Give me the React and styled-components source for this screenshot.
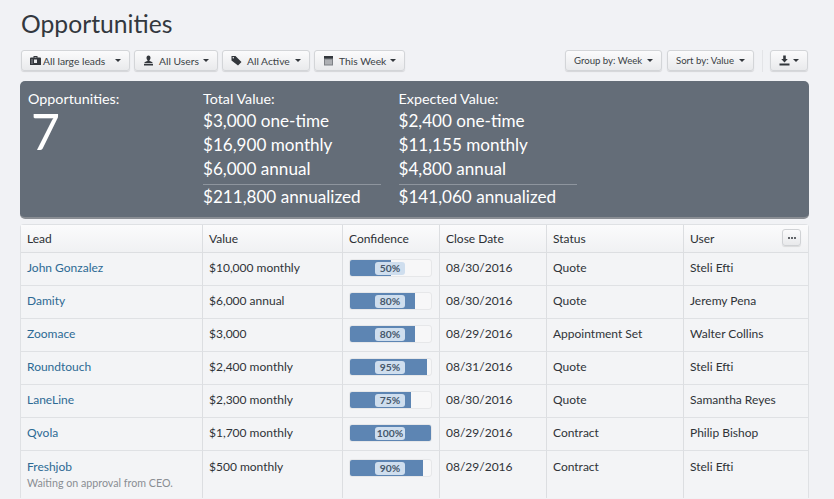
import React from 'react';
import styled, { createGlobalStyle } from 'styled-components';

const GlobalStyle = createGlobalStyle`
  html, body {
    margin: 0;
    height: 100%;
    overflow: hidden;
    background: #f1f2f5;
    font-family: Lato, "Open Sans", sans-serif;
    color: #2e3338;
  }
`;

const Page = styled.div`
  width: 834px;
  height: 499px;
  overflow: hidden;
  padding: 0 25px 0 20px;
  box-sizing: border-box;
`;

const Title = styled.h1`
  margin: 0;
  padding: 9px 0 0 1px;
  height: 50px;
  box-sizing: border-box;
  font-size: 24.7px;
  line-height: 30px;
  font-weight: 400;
  color: #33383e;
`;

const Toolbar = styled.div`
  display: flex;
  align-items: center;
  height: 21px;
  padding: 0 1px;
  gap: 4px;
`;

const Spacer = styled.div`
  flex: 1;
`;

const Button = styled.div`
  display: flex;
  align-items: center;
  justify-content: space-between;
  box-sizing: border-box;
  width: ${p => p.$width}px;
  height: 21px;
  padding: 0 8px 0 8px;
  border: 1px solid #d3d5d8;
  border-radius: 3px;
  background: linear-gradient(#fbfbfc, #e9eaec);
  box-shadow: 0 1px 1px rgba(0, 0, 0, 0.12);
  font-size: ${p => p.$small ? '9.6px' : '10.3px'};
  color: #3a3f45;
  white-space: nowrap;
`;

const SortButton = styled(Button)`
  margin-left: 1px;
`;

const ButtonLabel = styled.span`
  display: flex;
  align-items: center;
  gap: ${p => p.$gap || 5}px;
`;

const Caret = styled.span`
  width: 0;
  height: 0;
  border-left: 3px solid transparent;
  border-right: 3px solid transparent;
  border-top: 3px solid #33373c;
`;

const Divider = styled.div`
  width: 1px;
  height: 22px;
  margin: 0 3px 0 4px;
  background: #e3e4e7;
`;

const Summary = styled.section`
  display: flex;
  box-sizing: border-box;
  height: 138px;
  margin-top: 10px;
  padding: 8px 8px 0;
  background: #646d78;
  border-radius: 5px;
  border-bottom: 2px solid #8a8e94;
  color: #fff;
`;

const CountBlock = styled.div`
  width: 175px;
`;

const Label = styled.div`
  font-size: 14.3px;
  line-height: 20px;
`;

const Count = styled.div`
  font-size: 50px;
  line-height: 44px;
  font-weight: 400;
  margin-left: 3px;
`;

const ValueBlock = styled.div`
  width: 178px;
  margin-right: 17.5px;
`;

const Amount = styled.div`
  font-size: 17.1px;
  line-height: 24px;
`;

const Total = styled(Amount)`
  margin-top: 3px;
  border-top: 1px solid #8e959e;
`;

const Table = styled.table`
  width: 789px;
  margin-top: 5px;
  table-layout: fixed;
  border-collapse: separate;
  border-spacing: 0;
  background: #f3f4f6;
  border: 1px solid #dfe1e4;
  border-bottom: 0;
  border-radius: 4px 4px 0 0;
  font-size: 12px;
`;

const Head = styled.th`
  position: relative;
  height: 27px;
  padding: 0 6px;
  text-align: left;
  font-weight: 400;
  font-size: 12px;
  color: #2c3035;
  background: linear-gradient(#fbfbfc, #f0f1f3);
  border-bottom: 1px solid #dcdee1;
  border-right: 1px solid #dcdee1;
  &:last-child {
    border-right: 0;
  }
`;

const Cell = styled.td`
  height: ${p => p.$tall ? '47px' : '33px'};
  padding: ${p => p.$tall ? '8px 6px 0' : '0 6px 3px'};
  box-sizing: border-box;
  vertical-align: ${p => p.$tall ? 'top' : 'middle'};
  color: #2f3338;
  border-bottom: ${p => p.$tall ? '0' : '1px solid #dfe1e4'};
  border-right: 1px solid #dcdee1;
  &:last-child {
    border-right: 0;
  }
`;

const LeadLink = styled.a`
  color: #2d6a94;
  line-height: 15px;
  display: block;
`;

const CellText = styled.div`
  line-height: 15px;
`;

const Note = styled.div`
  margin-top: 2px;
  color: #8a8e93;
  font-size: 10.7px;
`;

const Progress = styled.div`
  position: relative;
  width: 83px;
  height: 18px;
  box-sizing: border-box;
  background: #f7f7f8;
  border: 1px solid #e6e7e9;
  border-radius: 3px;
  overflow: hidden;
`;

const ProgressFill = styled.div`
  height: 100%;
  background: #5d85b3;
`;

const ProgressLabel = styled.span`
  position: absolute;
  left: 25px;
  top: 2px;
  width: 30px;
  height: 13px;
  line-height: 13px;
  text-align: center;
  font-size: 10.3px;
  font-weight: 700;
  color: #46586c;
  background: #cfdeee;
  border-radius: 3px;
`;

const MoreButton = styled.div`
  position: absolute;
  right: 7px;
  top: 4px;
  width: 19px;
  height: 17px;
  box-sizing: border-box;
  display: flex;
  align-items: center;
  justify-content: center;
  gap: 1px;
  border: 1px solid #d0d2d5;
  border-radius: 3px;
  background: linear-gradient(#fbfbfc, #e8e9eb);
  box-shadow: 0 1px 1px rgba(0, 0, 0, 0.1);
`;

const Dot = styled.i`
  width: 2px;
  height: 2px;
  border-radius: 50%;
  background: #33373c;
`;

const Icon = styled.svg`
  width: 11px;
  height: 11px;
  flex: none;
  fill: #33373c;
`;

const CaseIcon = () => (
  <Icon viewBox="0 0 11 11">
    <path d="M3.5 1h4v1.500H10a1 1 0 0 1 1 1V10H0V3.500a1 1 0 0 1 1-1h2.500zM4.500 2v.5h2V2z" fillRule="evenodd" />
    <rect x="4" y="4.500" width="3" height="3.500" fill="#e9eaec" />
    <rect x="1.500" y="4" width="1" height="5" fill="#8d9095" />
  </Icon>
);

const UserIcon = () => (
  <Icon viewBox="0 0 11 11">
    <path d="M5.500.5c1.400 0 2 1 2 2.300 0 1-.5 1.900-1 2.400v.8c1 .5 3 .8 3.300 2.200H1.200c.3-1.400 2.300-1.700 3.300-2.200v-.8c-.5-.5-1-1.400-1-2.400C3.500 1.500 4.100.5 5.500.5z" />
    <rect x="1" y="9" width="9" height="1.500" />
  </Icon>
);

const TagIcon = () => (
  <Icon viewBox="0 0 11 11">
    <path d="M.5 1H4.500L10.500 7 7 10.500 .5 5.500zM2.300 2a.8.8 0 1 0 0 1.600.8.8 0 0 0 0-1.600z" fillRule="evenodd" />
  </Icon>
);

const CalendarIcon = () => (
  <Icon viewBox="0 0 11 11">
    <rect x="1" y="1" width="9" height="9.500" fill="#7d8085" />
    <rect x="1" y="1" width="9" height="2.500" />
    <rect x="2" y="4.500" width="7" height="5" fill="#aeb0b4" />
  </Icon>
);

const DownloadIcon = () => (
  <Icon viewBox="0 0 11 11">
    <path d="M4.200.5h2.600v3.500h2L5.500 7.500 2.200 4h2z" />
    <rect x="0.500" y="8.500" width="10" height="2" />
  </Icon>
);

const columns = [182, 140, 97, 107, 137, 124];

const rows = [
  { lead: 'John Gonzalez', value: '$10,000 monthly', pct: 50, date: '08/30/2016', status: 'Quote', user: 'Steli Efti' },
  { lead: 'Damity', value: '$6,000 annual', pct: 80, date: '08/30/2016', status: 'Quote', user: 'Jeremy Pena' },
  { lead: 'Zoomace', value: '$3,000', pct: 80, date: '08/29/2016', status: 'Appointment Set', user: 'Walter Collins' },
  { lead: 'Roundtouch', value: '$2,400 monthly', pct: 95, date: '08/31/2016', status: 'Quote', user: 'Steli Efti' },
  { lead: 'LaneLine', value: '$2,300 monthly', pct: 75, date: '08/30/2016', status: 'Quote', user: 'Samantha Reyes' },
  { lead: 'Qvola', value: '$1,700 monthly', pct: 100, date: '08/29/2016', status: 'Contract', user: 'Philip Bishop' },
  { lead: 'Freshjob', note: 'Waiting on approval from CEO.', value: '$500 monthly', pct: 90, date: '08/29/2016', status: 'Contract', user: 'Steli Efti' },
];

const ValueColumn = ({ title, lines, total }) => (
  <ValueBlock>
    <Label>{title}</Label>
    {lines.map(line => <Amount key={line}>{line}</Amount>)}
    <Total>{total}</Total>
  </ValueBlock>
);

const App = () => (
  <Page>
    <GlobalStyle />
    <Title>Opportunities</Title>
    <Toolbar>
      <Button $width={109}><ButtonLabel $gap={2}><CaseIcon />All large leads</ButtonLabel><Caret /></Button>
      <Button $width={84}><ButtonLabel><UserIcon />All Users</ButtonLabel><Caret /></Button>
      <Button $width={88}><ButtonLabel><TagIcon />All Active</ButtonLabel><Caret /></Button>
      <Button $width={91}><ButtonLabel><CalendarIcon />This Week</ButtonLabel><Caret /></Button>
      <Spacer />
      <Button $width={97} $small>Group by: Week<Caret /></Button>
      <SortButton $width={87} $small>Sort by: Value<Caret /></SortButton>
      <Divider />
      <Button $width={38}><DownloadIcon /><Caret /></Button>
    </Toolbar>
    <Summary>
      <CountBlock>
        <Label>Opportunities:</Label>
        <Count>7</Count>
      </CountBlock>
      <ValueColumn
        title="Total Value:"
        lines={['$3,000 one-time', '$16,900 monthly', '$6,000 annual']}
        total="$211,800 annualized"
      />
      <ValueColumn
        title="Expected Value:"
        lines={['$2,400 one-time', '$11,155 monthly', '$4,800 annual']}
        total="$141,060 annualized"
      />
    </Summary>
    <Table>
      <colgroup>
        {columns.map((width, i) => <col key={i} style={{ width }} />)}
      </colgroup>
      <thead>
        <tr>
          <Head>Lead</Head>
          <Head>Value</Head>
          <Head>Confidence</Head>
          <Head>Close Date</Head>
          <Head>Status</Head>
          <Head>User<MoreButton><Dot /><Dot /><Dot /></MoreButton></Head>
        </tr>
      </thead>
      <tbody>
        {rows.map(row => (
          <tr key={row.lead}>
            <Cell $tall={!!row.note}>
              <LeadLink>{row.lead}</LeadLink>
              {row.note && <Note>{row.note}</Note>}
            </Cell>
            <Cell $tall={!!row.note}><CellText>{row.value}</CellText></Cell>
            <Cell $tall={!!row.note}>
              <Progress>
                <ProgressFill style={{ width: `${row.pct}%` }} />
                <ProgressLabel>{row.pct}%</ProgressLabel>
              </Progress>
            </Cell>
            <Cell $tall={!!row.note}><CellText>{row.date}</CellText></Cell>
            <Cell $tall={!!row.note}><CellText>{row.status}</CellText></Cell>
            <Cell $tall={!!row.note}><CellText>{row.user}</CellText></Cell>
          </tr>
        ))}
      </tbody>
    </Table>
  </Page>
);

export default App;
